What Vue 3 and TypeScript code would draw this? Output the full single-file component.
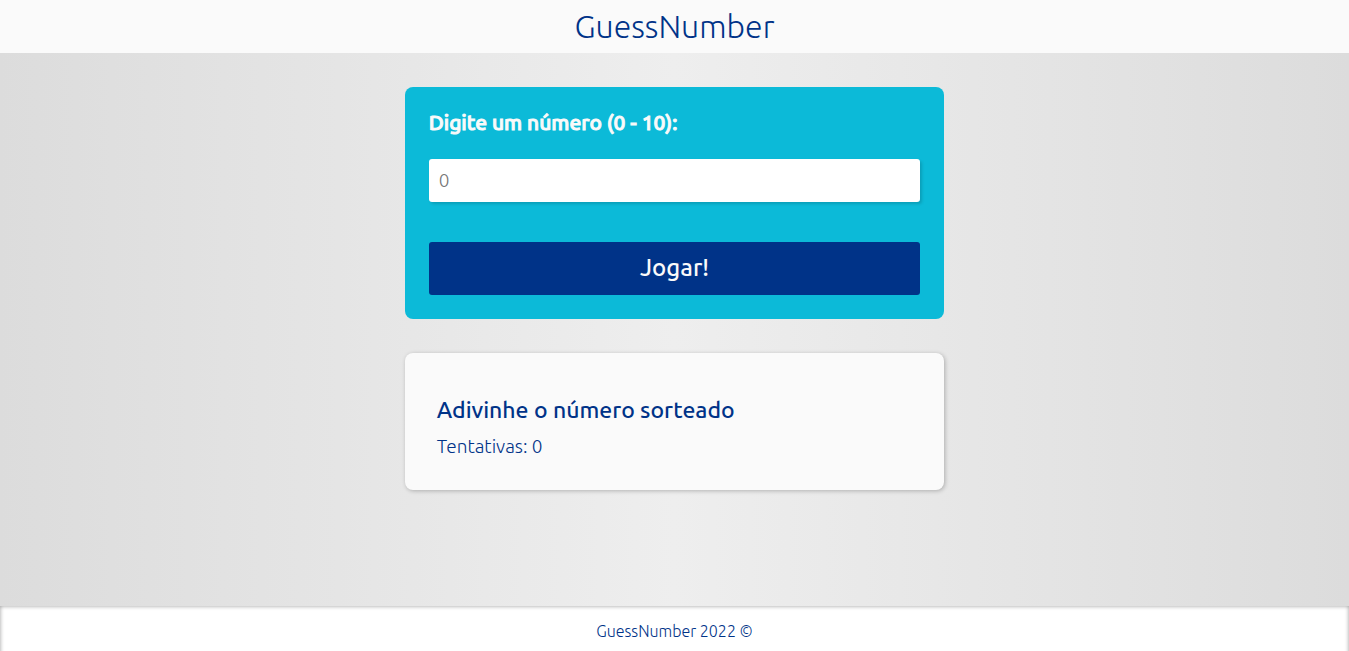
<script setup lang="ts">
import { ref } from 'vue'

const guess = ref('')
const attempts = ref(0)
const message = ref('Adivinhe o número sorteado')
const target = Math.floor(Math.random() * 11)

function play(): void {
  if (String(guess.value).trim() === '') return
  const value = Number(guess.value)
  attempts.value++
  if (value === target) message.value = 'Parabéns, você acertou!'
  else message.value = value < target ? 'O número é maior' : 'O número é menor'
  guess.value = ''
}
</script>

<template>
  <div class="page">
    <header class="header">
      <h1 class="brand">GuessNumber</h1>
    </header>
    <main class="main">
      <form class="card form" novalidate @submit.prevent="play">
        <label class="label" for="guess">Digite um número (0 - 10):</label>
        <input id="guess" v-model="guess" class="field" type="number" min="0" max="10" placeholder="0" />
        <button class="play" type="submit">Jogar!</button>
      </form>
      <section class="card result" aria-live="polite">
        <h2 class="message">{{ message }}</h2>
        <p class="attempts">Tentativas: {{ attempts }}</p>
      </section>
    </main>
    <footer class="footer">GuessNumber 2022 ©</footer>
  </div>
</template>

<style>
body {
  margin: 0;
}
</style>

<style scoped>
.page,
.page * {
  box-sizing: border-box;
}
.page {
  display: flex;
  flex-direction: column;
  min-height: 100vh;
  overflow: hidden;
  font-family: Ubuntu, "Open Sans", "Noto Sans", sans-serif;
  font-weight: 300;
  color: #003388;
  background: linear-gradient(to right, #dcdcdc, #eeeeee, #dcdcdc);
}
.header {
  padding: 8px 16px;
  background: #fafafa;
  text-align: center;
}
.brand {
  margin: 0;
  font-size: 32px;
  line-height: 37px;
  font-weight: 300;
}
.main {
  flex: 1;
  display: flex;
  flex-direction: column;
  align-items: center;
  gap: 34px;
  padding: 34px 0;
}
.card {
  width: 40%;
  min-width: 300px;
  border-radius: 8px;
}
.form {
  display: flex;
  flex-direction: column;
  padding: 24px;
  background: #0cbad8;
}
.label {
  margin-bottom: 26px;
  font-size: 21px;
  line-height: 22px;
  font-weight: 500;
  -webkit-text-stroke: 1px #fafafa;
  color: #fafafa;
}
.field {
  width: 100%;
  height: 43px;
  margin-bottom: 40px;
  padding: 0 10px 2px;
  border: 0;
  border-radius: 3px;
  background: #ffffff;
  box-shadow: 2px 2px 3px rgba(0, 0, 0, 0.15);
  font: inherit;
  font-size: 19px;
  color: #003388;
  appearance: textfield;
}
.field::placeholder {
  color: #757575;
}
.play {
  height: 53px;
  padding: 0 0 2px;
  border: 0;
  border-radius: 3px;
  background: #003388;
  font: inherit;
  font-size: 24px;
  font-weight: 500;
  color: #fafafa;
  cursor: pointer;
}
.result {
  padding: 44px 32px 32px;
  background: #fafafa;
  box-shadow: 1px 1px 4px rgba(0, 0, 0, 0.25);
}
.message {
  margin: 0 0 12px;
  font-size: 23px;
  line-height: 26px;
  font-weight: 500;
}
.attempts {
  margin: 0;
  font-size: 19px;
  line-height: 23px;
}
/* The lower edge runs past the page so that its inner shadow stays hidden. */
.footer {
  margin-bottom: -8px;
  padding: 16px 16px 19px;
  background: #ffffff;
  box-shadow: inset 0 0 4px rgba(0, 0, 0, 0.4);
  font-size: 16px;
  line-height: 18px;
  text-align: center;
}
</style>
